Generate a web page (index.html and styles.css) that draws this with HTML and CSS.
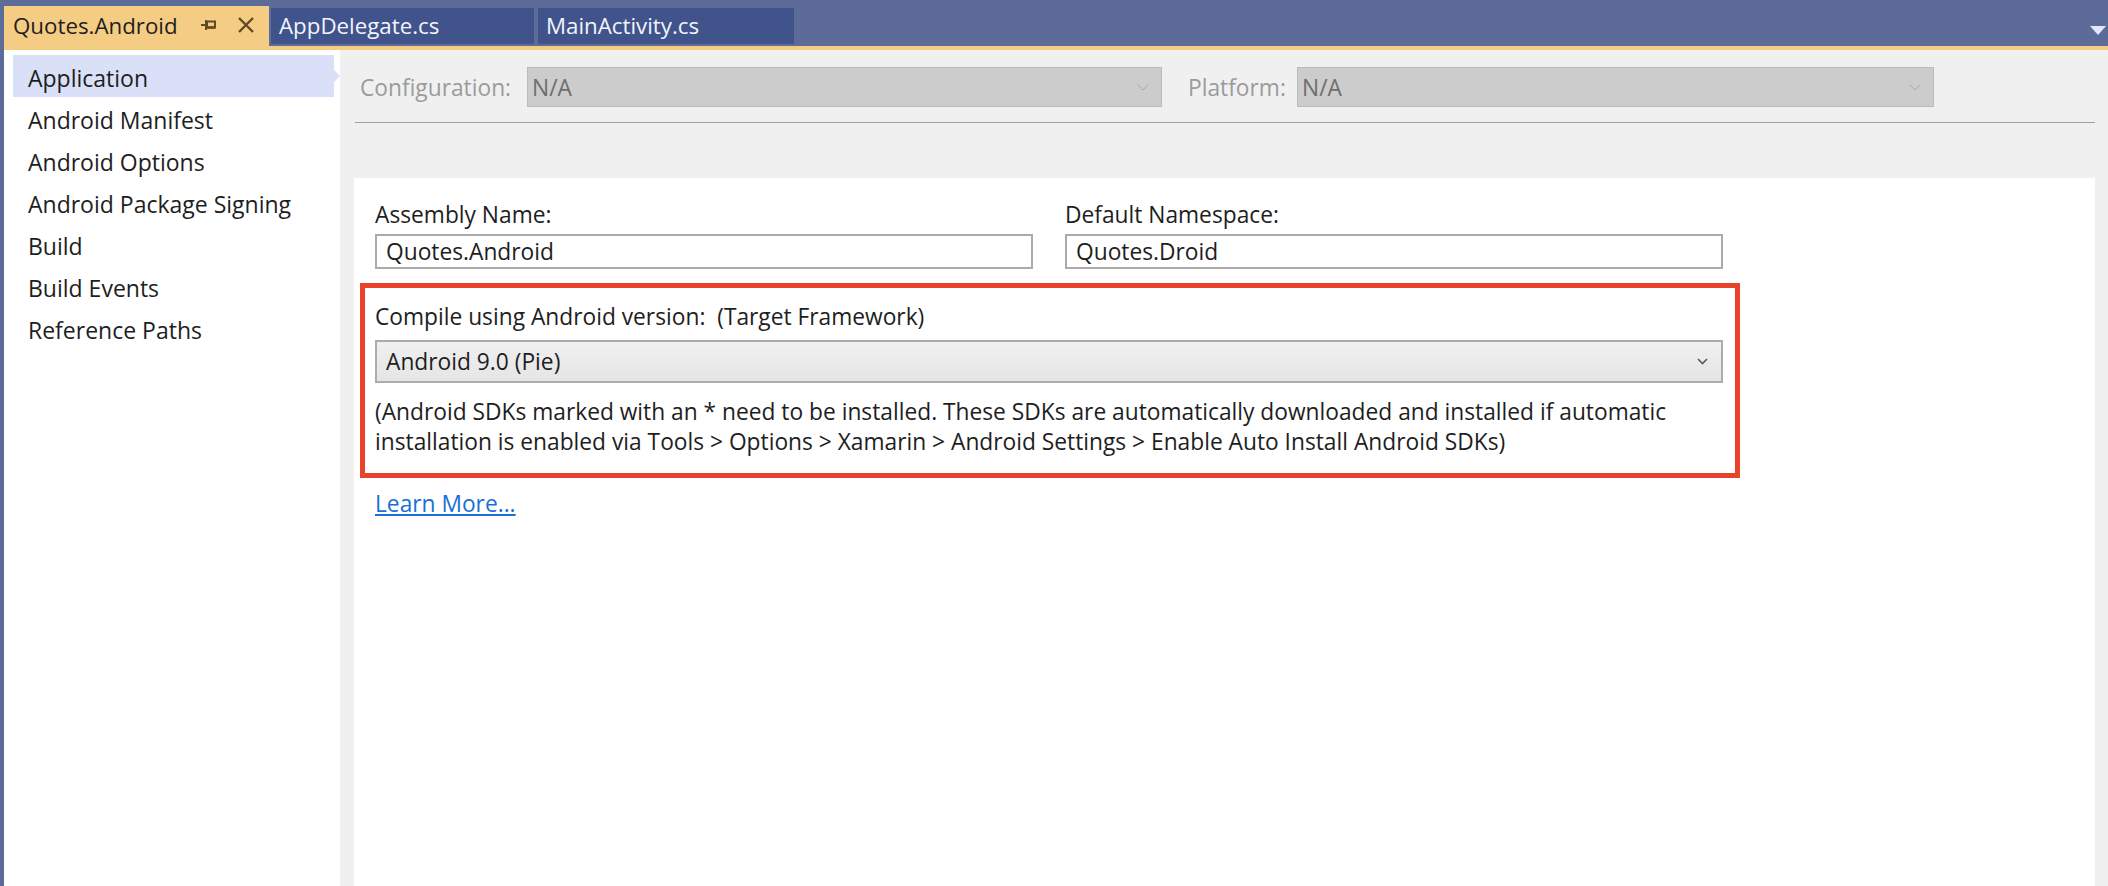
FILE: index.html
```html
<!DOCTYPE html>
<html lang="en">
<head>
<meta charset="utf-8">
<title>Quotes.Android - Project Properties</title>
<link rel="stylesheet" href="styles.css">
</head>
<body>
<div class="app">
  <div class="tabbar">
    <div class="tab tab-active">
      <span class="tab-title">Quotes.Android</span>
      <svg class="tab-pin" width="18" height="14" viewBox="0 0 18 14">
        <path d="M1 7 H6" stroke="#5E4B24" stroke-width="2"/>
        <path d="M6 2 V12" stroke="#5E4B24" stroke-width="2"/>
        <rect x="7" y="3.5" width="8" height="6" fill="none" stroke="#5E4B24" stroke-width="2"/>
        <path d="M7 9.5 H15" stroke="#5E4B24" stroke-width="2.5"/>
      </svg>
      <svg class="tab-close" width="18" height="16" viewBox="0 0 18 16">
        <path d="M2 1 L16 15 M16 1 L2 15" stroke="#5E4B24" stroke-width="2.4"/>
      </svg>
    </div>
    <div class="tab tab-inactive tab-second"><span class="tab-title">AppDelegate.cs</span></div>
    <div class="tab tab-inactive tab-third"><span class="tab-title">MainActivity.cs</span></div>
    <div class="tab-spacer"></div>
    <svg class="tab-overflow" width="16" height="9" viewBox="0 0 16 9">
      <path d="M0 0 H16 L8 9 Z" fill="#E3E7FB"/>
    </svg>
  </div>
  <div class="frame">
    <div class="tabline"></div>
    <div class="main">
      <nav class="sidebar">
        <div class="nav-item nav-selected">Application<span class="nav-pointer"></span></div>
        <div class="nav-item">Android Manifest</div>
        <div class="nav-item">Android Options</div>
        <div class="nav-item">Android Package Signing</div>
        <div class="nav-item">Build</div>
        <div class="nav-item">Build Events</div>
        <div class="nav-item">Reference Paths</div>
      </nav>
      <section class="content">
        <div class="configbar">
          <span class="config-label">Configuration:</span>
          <div class="config-select config-select-1">
            <span class="config-value">N/A</span>
            <svg class="config-chevron" width="12" height="7" viewBox="0 0 12 7"><path d="M0.5 0.5 L6 6 L11.5 0.5" fill="none" stroke="#A9A9A9" stroke-width="1"/></svg>
          </div>
          <span class="config-label config-label-platform">Platform:</span>
          <div class="config-select config-select-2">
            <span class="config-value">N/A</span>
            <svg class="config-chevron" width="12" height="7" viewBox="0 0 12 7"><path d="M0.5 0.5 L6 6 L11.5 0.5" fill="none" stroke="#A9A9A9" stroke-width="1"/></svg>
          </div>
        </div>
        <div class="separator"></div>
        <div class="panel">
          <div class="field-row">
            <div class="field">
              <div class="field-label">Assembly Name:</div>
              <div class="textbox">Quotes.Android</div>
            </div>
            <div class="field">
              <div class="field-label">Default Namespace:</div>
              <div class="textbox">Quotes.Droid</div>
            </div>
          </div>
          <div class="highlight-box">
            <div class="field-label">Compile using Android version:&nbsp; (Target Framework)</div>
            <div class="combobox">
              <span class="combo-value">Android 9.0 (Pie)</span>
              <svg class="combo-chevron" width="11" height="7" viewBox="0 0 11 7"><path d="M1 1 L5.5 5.5 L10 1" fill="none" stroke="#5A5A5A" stroke-width="1.6"/></svg>
            </div>
            <p class="note">(Android SDKs marked with an * need to be installed. These SDKs are automatically downloaded and installed if automatic<br>installation is enabled via Tools &gt; Options &gt; Xamarin &gt; Android Settings &gt; Enable Auto Install Android SDKs)</p>
          </div>
          <a class="learn-more" href="#">Learn More...</a>
        </div>
      </section>
    </div>
  </div>
</div>
</body>
</html>
```
FILE: styles.css
```css
* { box-sizing: border-box; }

html, body {
  margin: 0;
  padding: 0;
  width: 2108px;
  height: 886px;
  overflow: hidden;
  background: #5D6B99;
  font-family: "Open Sans", "Noto Sans", "Liberation Sans", sans-serif;
  color: #1E1E1E;
}

.app {
  width: 2108px;
  height: 886px;
  display: flex;
  flex-direction: column;
}

/* ---------- document tabs ---------- */
.tabbar {
  height: 46px;
  flex: none;
  display: flex;
  align-items: flex-start;
  padding: 6px 0 0 4px;
  background: #5D6B99;
}

.tab {
  display: flex;
  align-items: center;
  font-size: 22.3px;
  white-space: nowrap;
}

.tab-active {
  width: 265px;
  height: 40px;
  background: #F5CC84;
  color: #1E1E1E;
  padding-left: 9px;
  padding-bottom: 2px;
}

.tab-pin {
  margin-left: 22px;
}

.tab-close {
  margin-left: 19px;
}

.tab-inactive {
  height: 36px;
  margin-top: 2px;
  background: #40538A;
  color: #F2F4FF;
  padding-left: 8px;
  padding-bottom: 2px;
}

.tab-second {
  width: 263px;
  margin-left: 2px;
}

.tab-third {
  width: 256px;
  margin-left: 4px;
}

.tab-spacer {
  flex: 1;
}

.tab-overflow {
  margin: 20px 2px 0 0;
}

/* ---------- frame ---------- */
.frame {
  flex: 1;
  display: flex;
  flex-direction: column;
  border-left: 4px solid #5D6B99;
  min-height: 0;
}

.tabline {
  height: 4px;
  flex: none;
  background: #F5CC84;
}

.main {
  flex: 1;
  display: flex;
  min-height: 0;
}

/* ---------- sidebar ---------- */
.sidebar {
  width: 336px;
  flex: none;
  background: #FFFFFF;
  padding: 5px 6px 0 9px;
}

.nav-item {
  position: relative;
  height: 42px;
  padding-top: 4px;
  line-height: 38px;
  padding-left: 15px;
  font-size: 23px;
  color: #1E1E1E;
  white-space: nowrap;
}

.nav-selected {
  background: #DAE0F7;
}

.nav-pointer {
  position: absolute;
  right: -6px;
  top: 15px;
  width: 0;
  height: 0;
  border-top: 6px solid transparent;
  border-bottom: 6px solid transparent;
  border-left: 6px solid #DAE0F7;
}

/* ---------- content ---------- */
.content {
  flex: 1;
  display: flex;
  flex-direction: column;
  background: #F0F0F0;
  padding: 0 13px 0 14px;
  min-width: 0;
}

.configbar {
  display: flex;
  align-items: center;
  padding-top: 17px;
  margin-left: 6px;
  height: 57px;
  flex: none;
}

.config-label {
  font-size: 22.75px;
  color: #9B9B9B;
  width: 167px;
  white-space: nowrap;
}

.config-label-platform {
  width: 109px;
  margin-left: 26px;
}

.config-select {
  height: 40px;
  display: flex;
  align-items: center;
  justify-content: space-between;
  background: #CCCCCC;
  border: 1px solid #BBBBBB;
  padding: 0 12px 0 4px;
}

.config-select-1 {
  width: 635px;
}

.config-select-2 {
  width: 637px;
}

.config-value {
  font-size: 22.75px;
  color: #6E6E6E;
}

.separator {
  flex: none;
  height: 1px;
  margin: 15px 0 0 1px;
  background: #A0A0A0;
}

.panel {
  flex: 1;
  margin-top: 55px;
  background: #FFFFFF;
  padding: 22px 0 0 6px;
}

.field-row {
  display: grid;
  grid-template-columns: 658px 658px;
  column-gap: 32px;
  padding-left: 15px;
}

.field-label {
  font-size: 22.75px;
  line-height: 30px;
  white-space: nowrap;
}

.textbox {
  margin-top: 4px;
  height: 35px;
  border: 2px solid #ABABAB;
  padding-left: 9px;
  font-size: 22.75px;
  line-height: 31px;
}

.highlight-box {
  width: 1380px;
  margin-top: 14px;
  border: 5px solid #E8432A;
  padding: 14px 12px 16px 10px;
}

.combobox {
  margin-top: 8px;
  height: 43px;
  display: flex;
  align-items: center;
  justify-content: space-between;
  border: 2px solid #ACACAC;
  background: linear-gradient(#F0F0F0, #E5E5E5);
  padding: 0 13px 0 9px;
}

.combo-value {
  font-size: 22.75px;
}

.note {
  margin: 14px 0 0;
  font-size: 22.75px;
  line-height: 30px;
  white-space: nowrap;
}

.learn-more {
  display: inline-block;
  margin: 11px 0 0 15px;
  font-size: 22.75px;
  line-height: 30px;
  color: #1A6FD6;
  text-decoration: underline;
}
```
